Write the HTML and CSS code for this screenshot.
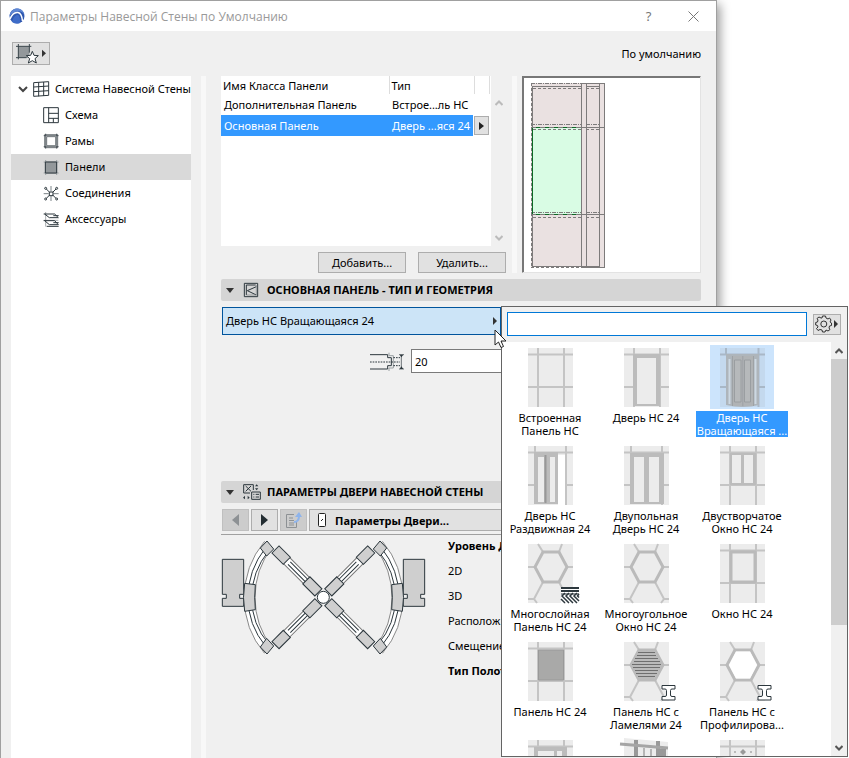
FILE: index.html
```
<!DOCTYPE html>
<html lang="ru">
<head>
    <meta charset="UTF-8">
    <meta name="viewport" content="width=device-width, initial-scale=1.0">
    <title>Параметры Навесной Стены по Умолчанию</title>
    <link rel="stylesheet" href="styles.css">
</head>
<body>
    <!-- Shared thumbnail shapes -->
    <svg class="defs" width="0" height="0" aria-hidden="true">
        <defs>
            <g id="grid">
                <rect class="pane" width="45" height="59"/>
                <path class="bar" d="M10 0V59M36 0V59M0 6.500H45M0 39H45"/>
            </g>
            <g id="door-grid">
                <rect class="pane" width="45" height="59"/>
                <path class="bar" d="M7 0V7M38 0V59M0 6.500H45M0 39H45"/>
            </g>
            <g id="hex">
                <rect class="pane" width="45" height="59"/>
                <path class="bar" d="M10 0L15 8M34 0L31 8M0 23H7M39 23H45M15 38L6 55M31 38L40 55M0 55H6L9 59M45 55H40L37 59"/>
                <path class="frame" d="M15 8H31L39 23L31 38H15L7 23Z"/>
            </g>
            <g id="beam">
                <path class="badge" d="M38 43.500H51V47H48Q46.500 47 46.500 48.500V53Q46.500 54.500 48 54.500H51V58H38V54.500H41Q42.500 54.500 42.500 53V48.500Q42.500 47 41 47H38Z"/>
            </g>
        </defs>
    </svg>

    <div class="dialog">
        <header class="titlebar">
            <svg class="logo" width="16" height="16" viewBox="0 0 16 16" aria-hidden="true">
                <circle cx="8" cy="8" r="7.500" fill="#2f58b0"/>
                <path d="M0.500 8C1 3 5 .5 8 .5C12 .5 15 3 15.500 7C13 2 6 2 .5 8Z" fill="#5f87d4"/>
                <path d="M1 11C3 6 6 4 9 4.500C12 5 13 8 13.500 13" fill="none" stroke="#fff" stroke-width="1.500"/>
                <path d="M3 14C4 9 7 6.500 9 7C11 8 11 11 11 15Q7 16.500 3 14Z" fill="#3f6cc8"/>
            </svg>
            <h1>Параметры Навесной Стены по Умолчанию</h1>
            <button class="title-btn" aria-label="Справка">?</button>
            <button class="title-btn" aria-label="Закрыть">
                <svg width="11" height="11" viewBox="0 0 11 11"><path d="M.5.5L10.500 10.500M10.500.5L.5 10.500" stroke="#777"/></svg>
            </button>
        </header>

        <div class="topbar">
            <button class="favorites" aria-label="Избранное">
                <svg width="34" height="20" viewBox="42 132 102 60">
                    <rect x="54" y="139" width="34" height="34" fill="#93989b"/>
                    <path d="M48 139H94M55 132V178M48 173H80M88 132V158" fill="none" stroke="#3b464c" stroke-width="3"/>
                    <path d="M97 154L102 166L115 167L105 176L109 189L97 182L85 189L89 176L79 167L92 166Z" fill="#fff" stroke="#2c373d" stroke-width="3"/>
                    <path d="M126 149L138 160L126 171Z" fill="#333"/>
                </svg>
            </button>
            <span>По умолчанию</span>
        </div>

        <div class="dialog-body">
            <nav class="tree">
                <a class="tree-root" href="#">
                    <svg width="10" height="7" viewBox="0 0 10 7"><path d="M1 1L5 5L9 1" fill="none" stroke="#444" stroke-width="2"/></svg>
                    <svg class="icon" width="17" height="17" viewBox="99 242 51 51">
                        <path d="M101 247L146 244V285L101 288ZM101 260L146 257M101 274L146 271M116 246V288M131 245V287" fill="none" stroke="#2c373d" stroke-width="3"/>
                    </svg>
                    <span>Система Навесной Стены</span>
                </a>
                <a href="#">
                    <svg class="icon" width="17" height="17" viewBox="129 320 51 51">
                        <path d="M131 322H175V367H131ZM146 322V367M146 339H175M146 354H175M160 354V367" fill="none" stroke="#2c373d" stroke-width="3"/>
                    </svg>
                    <span>Схема</span>
                </a>
                <a href="#">
                    <svg class="icon" width="17" height="17" viewBox="129 398 51 51">
                        <path d="M134 403H173V442H134ZM140 409H167V436H140ZM131 406H176M131 439H176M137 400V445M170 400V445" fill="none" stroke="#2c373d" stroke-width="2"/>
                    </svg>
                    <span>Рамы</span>
                </a>
                <a class="active" href="#">
                    <svg class="icon" width="17" height="17" viewBox="129 476 51 51">
                        <rect x="136" y="485" width="34" height="34" fill="#93989b"/>
                        <path d="M131 485H176M131 518H176M137 479V524M170 479V524" stroke="#9a9fa2" stroke-width="3"/>
                        <path d="M136 485H170V518H136Z" fill="none" stroke="#2c373d" stroke-width="3"/>
                    </svg>
                    <span>Панели</span>
                </a>
                <a href="#">
                    <svg class="icon" width="17" height="17" viewBox="129 554 51 51">
                        <path d="M153 557V573M153 587V602M131 580H146M160 580H176" stroke="#7b8387" stroke-width="3"/>
                        <path d="M139 566L149 576M168 566L158 576M139 594L149 584M168 594L158 584M148 575H159V586H148Z" fill="none" stroke="#2c373d" stroke-width="3"/>
                        <g fill="#fff" stroke="#2c373d" stroke-width="3"><circle cx="137" cy="564" r="3"/><circle cx="170" cy="564" r="3"/><circle cx="137" cy="596" r="3"/><circle cx="170" cy="596" r="3"/></g>
                    </svg>
                    <span>Соединения</span>
                </a>
                <a href="#">
                    <svg class="icon" width="17" height="17" viewBox="129 632 51 51">
                        <path d="M137 635V679M131 660H175" stroke="#7b8387" stroke-width="2"/>
                        <path d="M131 641H164L175 652H148L134 641M131 661H164L175 673H148L134 661M140 678H176M160 646H176M160 667H176" fill="none" stroke="#2c373d" stroke-width="3"/>
                    </svg>
                    <span>Аксессуары</span>
                </a>
            </nav>
            <div class="splitter"></div>

            <main class="content">
                <div class="classes">
                    <div class="class-list">
                        <div class="table-wrap">
                            <div class="table-box">
                                <table>
                                    <thead>
                                        <tr><th class="col-name">Имя Класса Панели</th><th class="col-type">Тип</th><th></th></tr>
                                    </thead>
                                    <tbody>
                                        <tr><td>Дополнительная Панель</td><td>Встрое...ль НС</td><td></td></tr>
                                        <tr class="selected">
                                            <td>Основная Панель</td>
                                            <td>Дверь ...яся 24</td>
                                            <td><button class="row-btn" aria-label="Выбрать тип"><svg width="5" height="8" viewBox="0 0 5 8"><path d="M0 0L5 4L0 8Z" fill="#222"/></svg></button></td>
                                        </tr>
                                    </tbody>
                                </table>
                            </div>
                            <div class="list-scroll">
                                <svg width="8" height="6" viewBox="0 0 8 6"><path d="M.5 5L4 1.500L7.500 5" fill="none" stroke="#bbb" stroke-width="2"/></svg>
                                <svg width="8" height="6" viewBox="0 0 8 6"><path d="M.5 1L4 4.500L7.500 1" fill="none" stroke="#bbb" stroke-width="2"/></svg>
                            </div>
                        </div>
                        <div class="list-buttons">
                            <button>Добавить...</button>
                            <button>Удалить...</button>
                        </div>
                    </div>
                    <div class="splitter"></div>
                    <div class="preview">
                        <svg width="75" height="187" viewBox="66 249 225 561" shape-rendering="crispEdges">
                            <rect x="67" y="253" width="219" height="552" fill="#eae1e1"/>
                            <rect x="70" y="385" width="147" height="261" fill="#d9fce4"/>
                            <g fill="none" stroke="#7d7b7b" stroke-width="3">
                                <path d="M217 253H287V805H217ZM232 253V805M271 253V805"/>
                                <path d="M70 263V803H217M70 263H217M232 263H271M67 384H287M67 647H287M70 803H271"/>
                                <path d="M67 253H271M67 377H217M232 377H271M67 641H217M232 641H271" stroke-dasharray="12 3 3 3"/>
                                <path d="M73 269H217M232 269H271M73 392H217M232 392H271M73 656H217M232 656H271M67 253V805M67 806H271" stroke-dasharray="9 6"/>
                            </g>
                            <path d="M70 386V646" stroke="#0c6a25" stroke-width="3"/>
                            <path d="M82 386H217M82 647H217" stroke="#0c6a25" stroke-width="3" stroke-dasharray="12 15"/>
                        </svg>
                    </div>
                </div>

                <h2 class="section">
                    <svg width="8" height="5" viewBox="0 0 8 5"><path d="M0 0H8L4 5Z" fill="#333"/></svg>
                    <svg class="icon" width="18" height="16" viewBox="99 21 54 48">
                        <path d="M103 25H143V65H103ZM109 30H137M109 30V60M139 35L112 47L139 60" fill="none" stroke="#2c373d" stroke-width="3"/>
                        <path d="M109 60H139V30" fill="none" stroke="#7b8387" stroke-width="2"/>
                    </svg>
                    <span>ОСНОВНАЯ ПАНЕЛЬ - ТИП И ГЕОМЕТРИЯ</span>
                </h2>

                <div class="type-picker">
                    <button class="type-btn">
                        <span>Дверь НС Вращающаяся 24</span>
                        <svg width="4" height="8" viewBox="0 0 4 8"><path d="M0 0L4 4L0 8Z" fill="#333"/></svg>
                    </button>

                    <!-- Type popup -->
                    <div class="popup">
                        <div class="popup-head">
                            <input type="text" aria-label="Поиск">
                            <button aria-label="Настройки">
                                <svg width="24" height="18" viewBox="0 0 24 18">
                                    <path d="M7.500 1H10.500L11 3L13 4L14.500 3L16 5L15 7L16.500 8V10.500L14.500 11L14 13L15 14.500L13 16L11 15L10 17H7.500L7 15L5 14.500L3 15.500L1.500 13.500L3 12L2.500 10.500L.7 10V7.500L2.500 7L3 5L2 3.500L4 2L6 3L7 3Z" fill="none" stroke="#333"/>
                                    <circle cx="8.800" cy="9" r="3" fill="none" stroke="#333"/>
                                    <path d="M19 5L23 9L19 13Z" fill="#333"/>
                                </svg>
                            </button>
                        </div>
                        <div class="popup-main">
                            <ul class="types">
                                <li><button>
                                    <svg viewBox="0 0 45 59"><use href="#grid"/></svg>
                                    <span>Встроенная Панель НС</span>
                                </button></li>
                                <li><button>
                                    <svg viewBox="0 0 45 59"><use href="#grid"/><path class="fill" d="M9 6H36V58H9Z"/><path class="glass" d="M13 10H32V56H13Z"/></svg>
                                    <span>Дверь НС 24</span>
                                </button></li>
                                <li><button class="selected">
                                    <svg viewBox="0 0 45 59">
                                        <path class="pane" d="M0 0H45V59H0Z"/>
                                        <path class="bar" d="M6 0V7M38.500 0V59M0 6.500H45M0 39H7M38 39H45"/>
                                        <path d="M6 6H39V57Q23 61 6 57Z" fill="#aeb5bb"/>
                                        <path d="M9.500 11V56M35.500 11V56" stroke="#ccd8e2" stroke-width="2"/>
                                        <path d="M12 8H34V58H12Z" fill="#b0b3b5"/>
                                        <path d="M14.500 12H21V54H14.500ZM24.500 12H30.500V54H24.500Z" fill="#b6b9bb" stroke="#9a9ea1"/>
                                        <path d="M22.800 8V58M12.500 8V58M33.500 8V58" stroke="#9ea2a5"/>
                                    </svg>
                                    <span>Дверь НС Вращающаяся ...</span>
                                </button></li>
                                <li><button>
                                    <svg viewBox="0 0 45 59"><use href="#door-grid"/><path class="fill" d="M6 6H30V58H6Z"/><path class="glass" d="M10 11H16V56H10ZM22 11H27V56H22Z"/><path d="M17.500 9V57" stroke="#989898" stroke-width="2"/><path d="M30 9H37V59H30Z" fill="#fff"/></svg>
                                    <span>Дверь НС Раздвижная 24</span>
                                </button></li>
                                <li><button>
                                    <svg viewBox="0 0 45 59"><use href="#door-grid"/><path class="fill" d="M6 7H40V58H6Z"/><path class="glass" d="M10 11H20V56H10ZM25 11H35V56H25Z"/></svg>
                                    <span>Двупольная Дверь НС 24</span>
                                </button></li>
                                <li><button>
                                    <svg viewBox="0 0 45 59"><use href="#grid"/><path class="fill" d="M10 7H36V39H10Z"/><path class="glass" d="M12 9H21V37H12ZM24 9H33V37H24Z"/></svg>
                                    <span>Двустворчатое Окно НС 24</span>
                                </button></li>
                                <li><button>
                                    <svg viewBox="0 0 45 59"><use href="#hex"/><path d="M33 43H51V59H33Z" fill="#fff"/><path d="M33 44H51M33 47H51" stroke="#2c373d" stroke-width="2"/><path d="M33 50H51" stroke="#2c373d"/><path d="M37 49L34 52L41 59M41 49L38 52L45 59M45 49L42 52L49 59M49 49L46 52L51 57M33 55L37 59M51 50L49.500 52L51 53.500" fill="none" stroke="#2c373d" stroke-width="1.500"/></svg>
                                    <span>Многослойная Панель НС 24</span>
                                </button></li>
                                <li><button>
                                    <svg viewBox="0 0 45 59"><use href="#hex"/></svg>
                                    <span>Многоугольное Окно НС 24</span>
                                </button></li>
                                <li><button>
                                    <svg viewBox="0 0 45 59"><use href="#grid"/><path class="frame" d="M11 8H35V38H11Z"/></svg>
                                    <span>Окно НС 24</span>
                                </button></li>
                                <li><button>
                                    <svg viewBox="0 0 45 59"><use href="#grid"/><path d="M10.500 8H35.500V38H10.500Z" fill="#a9a9a8" stroke="#999"/></svg>
                                    <span>Панель НС 24</span>
                                </button></li>
                                <li><button>
                                    <svg viewBox="0 0 45 59"><use href="#hex"/><path d="M15 9H30L38 23L30 37H15L8 23Z" fill="#bbb"/><path d="M14 10.500H31M13 13.500H32M11 16.500H34M10 19.500H36M8 22.500H37M9 25.500H36M11 28.500H34M12 31.500H33M14 34.500H31" stroke="#6f6f6f"/><use href="#beam"/></svg>
                                    <span>Панель НС с Ламелями 24</span>
                                </button></li>
                                <li><button>
                                    <svg viewBox="0 0 45 59"><use href="#hex"/><path d="M16 9.500H30L37 23L30 36.500H16L9 23Z" fill="#fff"/><use href="#beam"/></svg>
                                    <span>Панель НС с Профилирова...</span>
                                </button></li>
                                <li><button aria-label="Дверь">
                                    <svg viewBox="0 0 45 59"><use href="#grid"/><path class="fill" d="M6 7H39V58H6Z"/><path class="glass" d="M10 11H26V56H10ZM29 11H34V56H29Z"/></svg>
                                </button></li>
                                <li><button aria-label="Угловая панель">
                                    <svg viewBox="0 0 45 59"><path class="pane" d="M0 -2L44 2V59H0Z"/><path d="M12 0V59M34 1V59" stroke="#999" stroke-width="4"/><path d="M-4 4L44 8" stroke="#a5a5a5" stroke-width="3"/><path d="M20 8V59M27 9V59" stroke="#b5b5b5" stroke-width="2"/><path d="M35 9H42V59H35Z" fill="#999"/></svg>
                                </button></li>
                                <li><button aria-label="Точечное крепление">
                                    <svg viewBox="0 0 45 59"><use href="#grid"/><path d="M23 9L26 12L23 15L20 12Z" fill="#999"/><g fill="#aaa"><circle cx="15" cy="12" r="1"/><circle cx="31" cy="12" r="1"/></g></svg>
                                </button></li>
                            </ul>
                            <div class="scrollbar">
                                <svg width="8" height="6" viewBox="0 0 8 6"><path d="M.5 5L4 1.500L7.500 5" fill="none" stroke="#555" stroke-width="2"/></svg>
                                <div class="thumb"></div>
                                <svg width="8" height="6" viewBox="0 0 8 6"><path d="M.5 1L4 4.500L7.500 1" fill="none" stroke="#555" stroke-width="2"/></svg>
                            </div>
                        </div>
                    </div>

                    <svg class="cursor" width="13" height="20" viewBox="0 0 13 20" aria-hidden="true"><path d="M1 1V16L4.500 13L7 18.500L9.500 17.500L7 12H12Z" fill="#fff" stroke="#222"/></svg>
                </div>

                <div class="size-row">
                    <svg width="36" height="19" viewBox="477 230 108 57" aria-hidden="true">
                        <path d="M537 232V241H550V278H537V287" fill="none" stroke="#9aa0a3" stroke-width="3"/>
                        <path d="M480 238H533V247H544V271H533V281H480" fill="none" stroke="#2c373d" stroke-width="3"/>
                        <path d="M480 260H570M550 247H570M550 271H570" stroke="#2c373d" stroke-width="3" stroke-dasharray="5 3"/>
                        <path d="M567 238H582M567 281H582M574 240V280" stroke="#2c373d" stroke-width="2"/>
                        <path d="M569 238H580L574 246ZM569 281H580L574 273Z" fill="#2c373d"/>
                    </svg>
                    <input type="text" value="20" aria-label="Толщина панели">
                </div>

                <h2 class="section">
                    <svg width="8" height="5" viewBox="0 0 8 5"><path d="M0 0H8L4 5Z" fill="#333"/></svg>
                    <svg class="icon" width="18" height="16" viewBox="96 27 54 48">
                        <path d="M117 54H98V29H127V45M104 33L120 49M120 33L104 49M122 51H148V73H122ZM127 58H130M134 58H144M127 66H130M134 66H144" fill="none" stroke="#2c373d" stroke-width="3"/>
                        <path d="M132 34L137 28L142 34ZM132 40H142L137 46ZM102 62V73L96 68ZM110 62V73L116 68Z" fill="#2c373d"/>
                    </svg>
                    <span>ПАРАМЕТРЫ ДВЕРИ НАВЕСНОЙ СТЕНЫ</span>
                </h2>

                <div class="pager">
                    <button disabled aria-label="Назад"><svg width="7" height="12" viewBox="0 0 7 12"><path d="M7 0V12L0 6Z" fill="#8d9194"/></svg></button>
                    <button aria-label="Вперёд"><svg width="7" height="12" viewBox="0 0 7 12"><path d="M0 0V12L7 6Z" fill="#222c31"/></svg></button>
                    <button disabled aria-label="Вверх">
                        <svg width="16" height="16" viewBox="0 0 16 16"><path d="M8 2.500H.5V15.500H10.500V9M3 6H7M3 8.500H8M3 11H8M3 13H8" fill="none" stroke="#8d9194"/><path d="M8 10Q13 10 13 4" fill="none" stroke="#8eb4ec" stroke-width="2"/><path d="M9 5L13 0L16 5Z" fill="#8eb4ec"/></svg>
                    </button>
                    <button class="page-btn">
                        <svg width="8" height="14" viewBox="0 0 8 14"><rect x=".5" y=".5" width="7" height="13" rx="1" fill="#fff" stroke="#222"/><path d="M3 8L5 6" stroke="#222"/></svg>
                        <span>Параметры Двери...</span>
                    </button>
                </div>

                <div class="params">
                    <svg class="plan" width="205" height="116" viewBox="33 192 615 348" role="img" aria-label="План двери">
                        <defs>
                            <g id="leaf">
                                <path d="M-13 -176H13V-25H-13Z" fill="#fff" stroke="#777" stroke-width="3"/>
                                <path d="M-5 -145V-60M5 -145V-60" stroke="#2c373d" stroke-width="3"/>
                                <path d="M-15 -203H15V-155H-15ZM-15 -72H15V-21H-15Z" fill="#cfcfcf" stroke="#2c373d" stroke-width="3"/>
                            </g>
                            <g id="side">
                                <path d="M163 200Q103 272 103 368Q103 464 163 534L186 516Q135 452 135 368Q135 282 186 218Z" fill="#fff" stroke="#888" stroke-width="3"/>
                                <path d="M167 218Q114 285 114 368Q114 450 167 514M177 226Q125 290 125 368Q125 448 177 508" fill="none" stroke="#2c373d" stroke-width="3"/>
                                <path d="M37 253H101V358H89V370H101V394H37V370H49V358H37Z" fill="#cfcfcf" stroke="#2c373d" stroke-width="3"/>
                                <path d="M104 325L136 329Q132 367 136 404L104 409Q97 367 104 325ZM171 198L191 222L170 243L151 219ZM171 537L191 513L170 490L151 516Z" fill="#cfcfcf" stroke="#2c373d" stroke-width="3"/>
                            </g>
                        </defs>
                        <use href="#side"/>
                        <use href="#side" transform="translate(681 0) scale(-1 1)"/>
                        <use href="#leaf" transform="translate(340 367) rotate(45)"/>
                        <use href="#leaf" transform="translate(340 367) rotate(135)"/>
                        <use href="#leaf" transform="translate(340 367) rotate(225)"/>
                        <use href="#leaf" transform="translate(340 367) rotate(315)"/>
                        <circle cx="340" cy="367" r="18" fill="#fff" stroke="#2c373d" stroke-width="3"/>
                    </svg>
                    <ul>
                        <li><b>Уровень Д</b></li>
                        <li>2D</li>
                        <li>3D</li>
                        <li>Располож</li>
                        <li>Смещение</li>
                        <li><b>Тип Полот</b></li>
                    </ul>
                </div>
            </main>
        </div>
    </div>
</body>
</html>
```

FILE: styles.css
```
* {
    box-sizing: border-box;
}
body {
    margin: 0;
    background: #fff;
    color: #000;
    font-family: "Noto Sans", "Open Sans", sans-serif;
    font-size: 11px;
    line-height: 13px;
}
button, input {
    font: inherit;
    color: inherit;
}
button {
    display: flex;
    align-items: center;
    justify-content: center;
    padding: 0;
    background: #e1e1e1;
    border: 1px solid #adadad;
}
ul {
    margin: 0;
    padding: 0;
    list-style: none;
}
svg {
    flex: none;
    display: block;
}
.defs {
    position: absolute;
}

/* Dialog window */
.dialog {
    display: flex;
    flex-direction: column;
    min-height: 100vh;
    margin-right: 132px;
    background: #f0f0f0;
    border: 1px solid #a0a0a0;
    border-bottom: none;
    box-shadow: 3px 4px 10px rgba(0, 0, 0, 0.4);
}
.titlebar {
    display: flex;
    align-items: center;
    height: 30px;
    padding-left: 8px;
    background: #fff;
    color: #999;
}
.titlebar h1 {
    flex: 1;
    margin: 0 0 0 5px;
    font-family: "Open Sans", sans-serif;
    font-size: 12px;
    font-weight: normal;
}
.title-btn {
    width: 45px;
    height: 28px;
    background: none;
    border: none;
    color: #777;
    font-size: 13px;
}
.topbar {
    display: flex;
    align-items: center;
    justify-content: space-between;
    height: 45px;
    padding: 0 15px 0 11px;
}
.favorites {
    width: 38px;
    height: 23px;
}
.dialog-body {
    display: flex;
    flex: 1;
    padding: 0 15px 0 10px;
}

/* Settings tree */
.tree {
    width: 180px;
    background: #fff;
}
.tree a {
    display: flex;
    align-items: center;
    gap: 5px;
    height: 26px;
    padding-left: 32px;
    color: #000;
    text-decoration: none;
    white-space: nowrap;
}
.tree span, .section span, .type-btn span {
    padding-bottom: 2px;
}
.tree .tree-root {
    padding-left: 7px;
}
.tree .active {
    background: #d9d9d9;
}
.splitter {
    width: 5px;
    background: #f8f8f8;
}
.dialog-body > .splitter {
    margin: 0 15px 0 10px;
}
.content {
    flex: 1;
    min-width: 0;
}

/* Panel classes */
.classes {
    display: flex;
    gap: 5px;
    height: 197px;
}
.class-list {
    width: 286px;
}
.table-wrap {
    display: flex;
    height: 170px;
}
.table-box {
    width: 270px;
    background: #fff;
}
table {
    width: 269px;
    table-layout: fixed;
    border-collapse: collapse;
}
th, td {
    height: 21px;
    padding: 0 3px;
    text-align: left;
    font-weight: normal;
    white-space: nowrap;
}
th {
    height: 18px;
    padding: 0 2px;
    border-right: 1px solid #ddd;
}
.col-name {
    width: 168px;
}
.col-type {
    width: 85px;
}
td:last-child {
    padding: 0;
}
.selected td {
    background: #3399ff;
    color: #fff;
}
.row-btn {
    width: 15px;
    height: 19px;
    outline: 1px solid #fff;
}
.list-scroll {
    display: flex;
    flex-direction: column;
    align-items: center;
    justify-content: space-between;
    width: 16px;
    padding: 24px 0 5px;
}
.list-buttons {
    display: flex;
    justify-content: flex-end;
    gap: 12px;
    padding: 6px 1px 0 0;
}
.list-buttons button {
    width: 88px;
    height: 21px;
}
.preview {
    flex: 1;
    padding: 5px 8px;
    background: #fff;
    border: 1px solid;
    border-color: #777 #e3e3e3 #e3e3e3 #777;
    box-shadow: inset 1px 1px 0 #777;
}

/* Sections */
.section {
    display: flex;
    align-items: center;
    height: 22px;
    margin: 6px 0;
    padding-left: 5px;
    background: #d5d5d5;
    border-radius: 2px;
    font-size: 11px;
    font-weight: bold;
}
.section .icon {
    margin: 0 6px 0 9px;
}
.type-picker {
    position: relative;
    width: 279px;
    height: 28px;
    margin-left: 1px;
}
.type-btn {
    justify-content: space-between;
    width: 100%;
    height: 100%;
    padding: 0 3px;
    background: #cce4f7;
    border-color: #00549c;
}
.cursor {
    position: absolute;
    left: 272px;
    top: 22px;
}
.size-row {
    display: flex;
    align-items: center;
    gap: 6px;
    margin: 14px 0 108px 148px;
}
.size-row input {
    width: 120px;
    height: 24px;
    padding: 0 3px;
    border: 1px solid #7a7a7a;
}
.pager {
    display: flex;
    gap: 2px;
    padding: 0 0 3px 1px;
    border-bottom: 1px solid #a0a0a0;
}
.pager button {
    width: 27px;
    height: 22px;
}
.pager button:disabled {
    background: #ccc;
    border-color: #bfbfbf;
}
.pager .page-btn {
    flex: 1;
    justify-content: flex-start;
    gap: 9px;
    padding-left: 8px;
    font-weight: bold;
}
.params {
    display: flex;
    gap: 22px;
    padding-top: 4px;
}
.params li {
    height: 25px;
    white-space: nowrap;
}

/* Type popup */
.popup {
    position: absolute;
    top: -1px;
    left: 279px;
    display: flex;
    flex-direction: column;
    width: 347px;
    height: 451px;
    background: #f0f0f0;
    border: 1px solid #646464;
}
.popup-head {
    display: flex;
    align-items: center;
    gap: 6px;
    padding: 5px 6px 6px 5px;
}
.popup-head input {
    flex: 1;
    min-width: 0;
    height: 24px;
    border: 1px solid #0078d7;
}
.popup-head button {
    width: 28px;
    height: 21px;
}
.popup-main {
    display: flex;
    flex: 1;
    min-height: 0;
    background: #fff;
}
.types {
    display: grid;
    flex: 1;
    grid-template-columns: repeat(3, 96px);
    grid-auto-rows: 98px;
    overflow: hidden;
    padding-top: 3px;
}
.types button {
    flex-direction: column;
    justify-content: flex-start;
    width: 96px;
    background: none;
    border: none;
}
.types svg {
    width: 64px;
    height: 64px;
    padding: 3px 9px 2px 10px;
    overflow: visible;
}
.types span {
    width: 92px;
    margin-top: 2px;
}
.types .selected svg {
    background: #cce4fc;
}
.types .selected span {
    background: #3399ff;
    color: #fff;
}
.pane {
    fill: #ececec;
}
.bar {
    fill: none;
    stroke: #c4c4c4;
    stroke-width: 2;
}
.frame {
    fill: none;
    stroke: #bababa;
    stroke-width: 3;
}
.fill {
    fill: #bcbcbc;
}
.glass {
    fill: #ececec;
}
.badge {
    fill: #fff;
    stroke: #2c373d;
}
.selected .pane {
    fill: #c4d9ee;
}
.selected .bar {
    stroke: #a9b8c7;
}
.scrollbar {
    display: flex;
    flex-direction: column;
    align-items: center;
    width: 16px;
    padding: 6px 0 5px;
    background: #f0f0f0;
}
.scrollbar .thumb {
    width: 100%;
    height: 266px;
    margin: 5px 0 auto;
    background: #cdcdcd;
}
```
